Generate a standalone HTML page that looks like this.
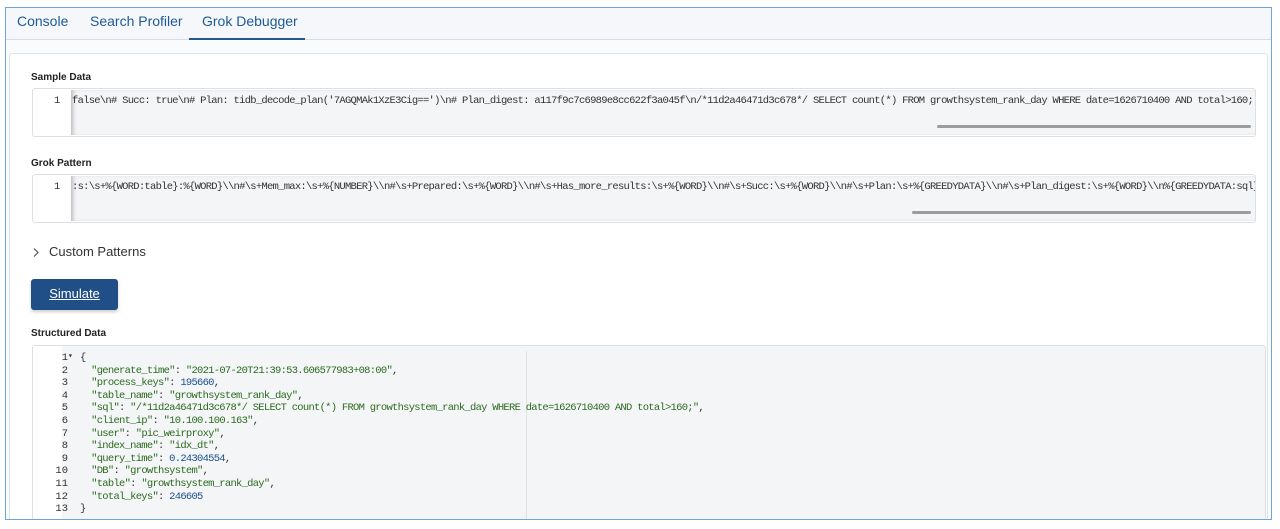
<!DOCTYPE html>
<html><head><meta charset="utf-8"><style>
*{box-sizing:border-box;margin:0;padding:0}
body{width:1280px;height:529px;background:#fff;position:relative;overflow:hidden;font-family:"Liberation Sans",sans-serif}
.abs{position:absolute}
.outer{left:5px;top:7px;width:1267px;height:513px;border:1px solid #6fa4e0;background:#fafbfd}
.tabs{left:6px;top:8px;width:1265px;height:32px;background:#f5f7fa;border-bottom:1px solid #d9dde3}
.tab{position:absolute;top:5px;font-size:14px;color:#1e5a94}
.panel{left:9px;top:53px;width:1259px;height:470px;background:#fff;border:1px solid #dfe3e8;border-radius:3px}
.lbl{font-size:10px;font-weight:bold;color:#222}
.ed{border:1px solid #dcdfe4;border-radius:3px;background:#fff}
.gut{position:absolute;left:0;top:0;bottom:0;background:#fff}
.code{position:absolute;background:#f4f5f7;font-family:"Liberation Mono",monospace;font-size:10.5px;letter-spacing:-0.73px;color:#333;white-space:pre;overflow:hidden}
.ln{position:absolute;font-family:"Liberation Mono",monospace;font-size:10.5px;color:#333}
.sb{position:absolute;height:3px;background:#9a9ca0;border-radius:2px}
.s{color:#2c6b1f}
.n{color:#1b4e8c}
</style></head><body>
<div class="abs outer"></div>
<div class="abs tabs">
<span class="tab" style="left:11px">Console</span>
<span class="tab" style="left:84px">Search Profiler</span>
<span class="tab" style="left:196px">Grok Debugger</span>
<div class="abs" style="left:183px;top:30px;width:116px;height:2px;background:#1e5a94"></div>
</div>
<div class="abs panel"></div>

<div class="abs lbl" style="left:31px;top:72px">Sample Data</div>
<div class="abs ed" style="left:32px;top:88px;width:1224px;height:49px">
<div class="ln" style="left:21px;top:6px">1</div>
<div class="code" style="left:38px;top:1px;width:1184px;height:45px;padding:5px 0 0 1px;box-shadow:inset 4px 0 4px -2px #bbb">false\n# Succ: true\n# Plan: tidb_decode_plan('7AGQMAk1XzE3Cig==')\n# Plan_digest: a117f9c7c6989e8cc622f3a045f\n/*11d2a46471d3c678*/ SELECT count(*) FROM growthsystem_rank_day WHERE date=1626710400 AND total&gt;160;</div>
<div class="sb" style="left:904px;top:36px;width:314px"></div>
</div>

<div class="abs lbl" style="left:31px;top:158px">Grok Pattern</div>
<div class="abs ed" style="left:32px;top:174px;width:1224px;height:49px">
<div class="ln" style="left:21px;top:6px">1</div>
<div class="code" style="left:38px;top:1px;width:1184px;height:45px;padding:5px 0 0 1px;box-shadow:inset 4px 0 4px -2px #bbb">:s:\s+%{WORD:table}:%{WORD}\\n#\s+Mem_max:\s+%{NUMBER}\\n#\s+Prepared:\s+%{WORD}\\n#\s+Has_more_results:\s+%{WORD}\\n#\s+Succ:\s+%{WORD}\\n#\s+Plan:\s+%{GREEDYDATA}\\n#\s+Plan_digest:\s+%{WORD}\\n%{GREEDYDATA:sql}</div>
<div class="sb" style="left:879px;top:36px;width:339px"></div>
</div>

<svg class="abs" style="left:32px;top:247px" width="8" height="11" viewBox="0 0 8 11"><path d="M2 1.5 L6 5.5 L2 9.5" fill="none" stroke="#555" stroke-width="1.2"/></svg>
<div class="abs" style="left:49px;top:244px;font-size:13px;color:#333">Custom Patterns</div>

<div class="abs" style="left:31px;top:279px;width:87px;height:31px;background:#1f4f86;border-radius:3px;box-shadow:0 2px 3px rgba(0,0,0,.2);color:#fff;font-size:13px;text-align:center;line-height:30px;text-decoration:underline">Simulate</div>

<div class="abs lbl" style="left:31px;top:328px">Structured Data</div>
<div class="abs ed" style="left:32px;top:345px;width:1234px;height:180px;background:#f4f5f7">
<div class="gut" style="width:29px;background:#fff"></div>
<div class="abs" style="left:493px;top:5px;width:1px;height:175px;background:#e1e2e4"></div>
<pre class="ln" style="left:0;top:6px;width:35px;text-align:right;line-height:12.6px">1
2
3
4
5
6
7
8
9
10
11
12
13</pre>
<div class="ln" style="left:35px;top:5px;font-size:8px">▾</div>
<pre class="code" style="left:47px;top:6px;width:1180px;background:transparent;line-height:12.6px">{
  <span class="s">"generate_time"</span>: <span class="s">"2021-07-20T21:39:53.606577983+08:00"</span>,
  <span class="s">"process_keys"</span>: <span class="n">195660</span>,
  <span class="s">"table_name"</span>: <span class="s">"growthsystem_rank_day"</span>,
  <span class="s">"sql"</span>: <span class="s">"/*11d2a46471d3c678*/ SELECT count(*) FROM growthsystem_rank_day WHERE date=1626710400 AND total&gt;160;"</span>,
  <span class="s">"client_ip"</span>: <span class="s">"10.100.100.163"</span>,
  <span class="s">"user"</span>: <span class="s">"pic_weirproxy"</span>,
  <span class="s">"index_name"</span>: <span class="s">"idx_dt"</span>,
  <span class="s">"query_time"</span>: <span class="n">0.24304554</span>,
  <span class="s">"DB"</span>: <span class="s">"growthsystem"</span>,
  <span class="s">"table"</span>: <span class="s">"growthsystem_rank_day"</span>,
  <span class="s">"total_keys"</span>: <span class="n">246605</span>
}</pre>
</div>
<div class="abs" style="left:5px;top:519px;width:1267px;height:1px;background:#6fa4e0"></div>
<div class="abs" style="left:0;top:520px;width:1280px;height:9px;background:#fff"></div>
</body></html>
